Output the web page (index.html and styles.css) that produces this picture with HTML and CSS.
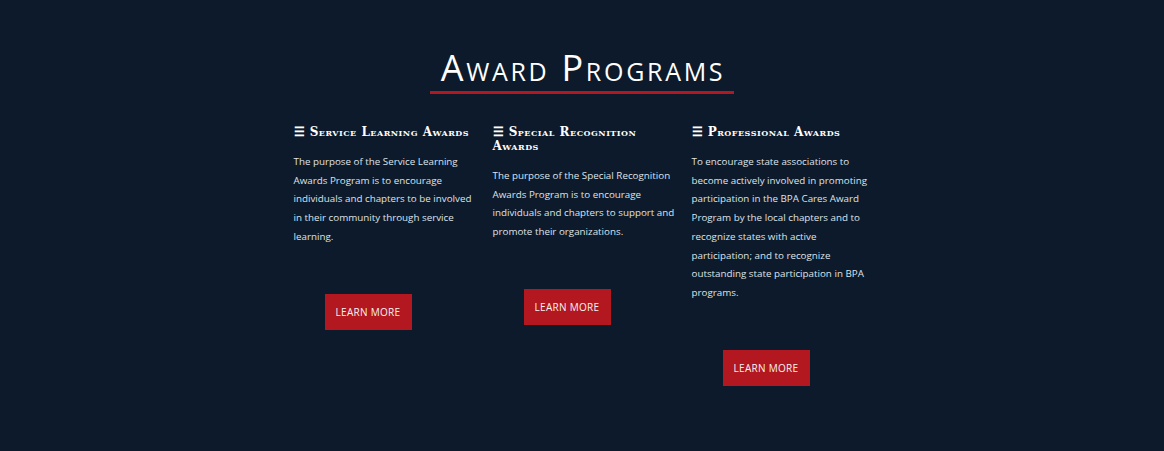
FILE: index.html
```html
<!DOCTYPE html>
<html lang="en">
<head>
<meta charset="utf-8">
<title>Award Programs</title>
<link rel="stylesheet" href="styles.css">
</head>
<body>
<section class="awards">
  <h1 class="title">Award Programs</h1>
  <div class="cols">
    <div class="col">
      <h3 class="col-head">☰ Service Learning Awards</h3>
      <p class="col-text">The purpose of the Service Learning Awards Program is to encourage individuals and chapters to be involved in their community through service learning.</p>
      <a class="btn" href="#">LEARN MORE</a>
    </div>
    <div class="col">
      <h3 class="col-head">☰ Special Recognition Awards</h3>
      <p class="col-text">The purpose of the Special Recognition Awards Program is to encourage individuals and chapters to support and promote their organizations.</p>
      <a class="btn" href="#">LEARN MORE</a>
    </div>
    <div class="col">
      <h3 class="col-head">☰ Professional Awards</h3>
      <p class="col-text">To encourage state associations to become actively involved in promoting participation in the BPA Cares Award Program by the local chapters and to recognize states with active participation; and to recognize outstanding state participation in BPA programs.</p>
      <a class="btn" href="#">LEARN MORE</a>
    </div>
  </div>
</section>
</body>
</html>
```
FILE: styles.css
```css
html, body {
  margin: 0;
  padding: 0;
  background: #0c1a2b;
  height: 100%;
}
body {
  font-family: "Open Sans", "DejaVu Sans", sans-serif;
  color: #dfe3ea;
}
.awards {
  display: flex;
  flex-direction: column;
  align-items: center;
  padding-top: 45px;
}
.title {
  margin: 0;
  font-family: "Open Sans", sans-serif;
  font-weight: 400;
  font-variant: small-caps;
  font-size: 36px;
  line-height: 46px;
  color: #ffffff;
  padding: 0 9px 0 11px;
  border-bottom: 3px solid #b3171f;
  letter-spacing: 2.7px;
}
.cols {
  display: grid;
  grid-template-columns: repeat(3, 199px);
  margin-top: 31px;
}
.col {
  padding: 0 7px 0 10px;
}
.col-head {
  margin: 0;
  font-family: "DejaVu Serif", serif;
  font-weight: 700;
  font-variant: small-caps;
  font-size: 12px;
  line-height: 14px;
  letter-spacing: 0.5px;
  color: #ffffff;
}
.col-text {
  margin: 14px 0 0;
  font-size: 9.8px;
  line-height: 18.7px;
  color: #dfe3ea;
}
.btn {
  display: inline-block;
  margin: 47px 0 0 31px;
  width: 87px;
  height: 36px;
  line-height: 36px;
  text-align: center;
  background: #b3171f;
  color: #f3f3f3;
  font-size: 10px;
  font-weight: 500;
  letter-spacing: 0.3px;
  text-decoration: none;
}
```
